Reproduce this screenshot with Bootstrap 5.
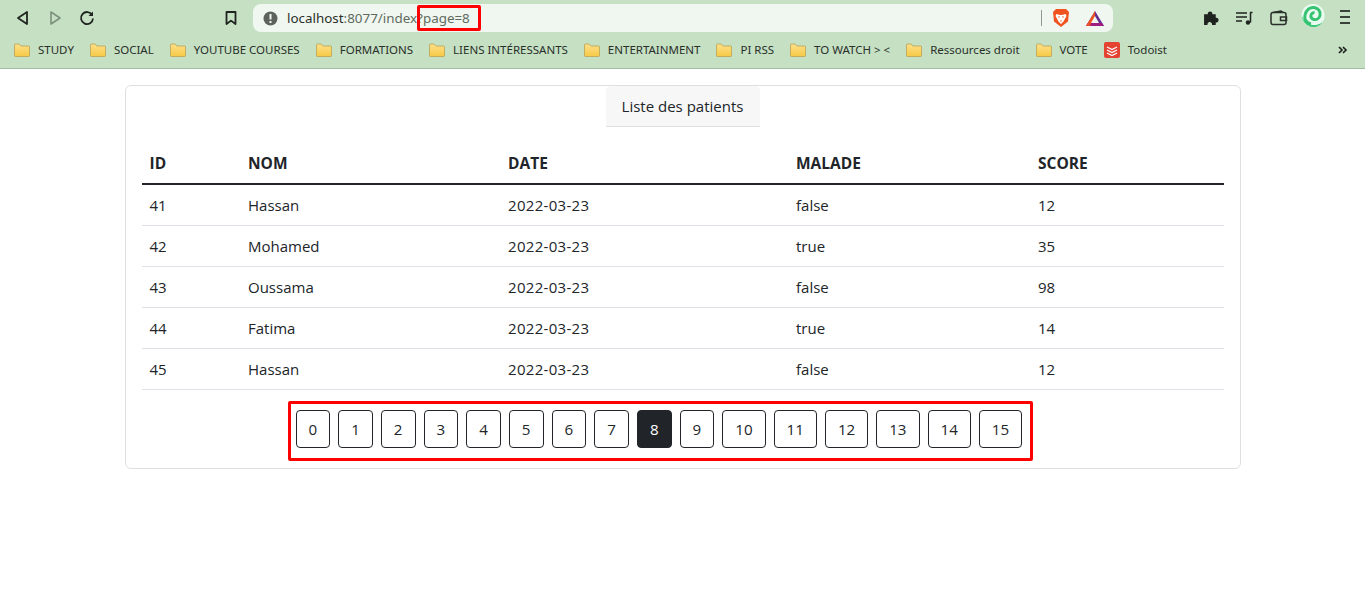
<!DOCTYPE html>
<html lang="fr">
<head>
<meta charset="utf-8">
<title>Liste des patients</title>
<link rel="stylesheet" href="https://cdn.jsdelivr.net/npm/bootstrap@5.3.0/dist/css/bootstrap.min.css">
<style>
body{font-family:"Open Sans","Noto Sans",sans-serif;font-size:15px;line-height:24px;color:#212529;overflow:hidden}
.chrome-top{background:#c5e0c3;height:69px;border-bottom:1px solid #a3bda2;font-family:"Noto Sans",sans-serif}
.tool-row{height:36px;padding-top:4px}
.nav-icons{width:253px;height:28px;flex:none;position:relative}
.nav-icons svg{position:absolute;top:5px}
.url-bar{width:860px;height:28px;background:#f0f7f0;border-radius:8px;flex:none;position:relative;padding-left:10px;gap:9px;font-size:13.4px;color:#5f6b5f}
.url-host{color:#2b2f2b}
.url-mark{position:absolute;left:164px;top:1px;width:64px;height:26px;border:3px solid #f00;border-radius:2px}
.url-sep{position:absolute;left:788px;top:6px;width:1px;height:16px;background:#8d9a8d}
.url-ico{position:absolute;top:5px}
.ext-row{flex:1;position:relative}
.ext-row svg{position:absolute;top:5px}
.mark-row{height:27px;padding-left:14px;gap:16px;font-size:11.5px;color:#2a2f2a;position:relative;white-space:nowrap}
.mark-item{display:flex;align-items:center;gap:8px}
.mark-more{position:absolute;left:1338px;top:9px}
.pat-card{margin-top:16px;border-color:#dfdfdf}
.pat-head{width:154px;height:41px;padding:8px 0;text-align:center;background:#f7f7f7;border-bottom:1px solid #dfdfdf;border-radius:0}
.pat-body{padding-bottom:7px}
.pat-table{table-layout:fixed;width:100%;margin-bottom:11px}
.pat-table th,.pat-table td{padding:8px;line-height:24px}
.pat-table thead th{font-weight:700;font-size:15.5px;border-bottom:2px solid #212529;height:41px}
.pat-table tbody td{height:41px;border-bottom:1px solid #dee2e6}
.pat-table thead{border-bottom:0}
.pat-table .date-cell{letter-spacing:.3px}
.w-id{width:98.5px}.w-nom{width:260px}.w-date{width:288px}.w-mal{width:242px}
.pager{border:3px solid #f00;border-radius:2px;padding:6px 8px 10px 5px;gap:8px;margin:0 0 0 146px;list-style:none;width:745px}
.pager-btn{padding:6px 12px;font-size:15.15px;line-height:24px;border-radius:4px;--bs-btn-border-color:#212529;--bs-btn-color:#212529;height:38px}
.pager-btn.btn-dark{color:#fff}
</style>
</head>
<body>
<svg width="0" height="0" class="d-block position-absolute">
  <defs>
    <linearGradient id="fold" x1="0" y1="0" x2="0" y2="1"><stop offset="0" stop-color="#fde08a"/><stop offset="1" stop-color="#f6c945"/></linearGradient>
    <symbol id="folder" viewBox="0 0 16 14"><path d="M.5 2q0-1 1-1h3.500l2 2h7.500q1 0 1 1v8.500q0 1-1 1h-13q-1 0-1-1z" fill="url(#fold)" stroke="#b59a4a" stroke-width=".7"/></symbol>
  </defs>
</svg>
<header class="chrome-top">
  <div class="tool-row d-flex">
    <div class="nav-icons">
      <svg style="left:14px" width="18" height="18" viewBox="0 0 18 18" fill="none" stroke="#202420" stroke-width="1.8" stroke-linejoin="round"><path d="M13 3 4 9l9 6z"/></svg>
      <svg style="left:46px" width="18" height="18" viewBox="0 0 18 18" fill="none" stroke="#7d917c" stroke-width="1.6" stroke-linejoin="round"><path d="M5 3l9 6-9 6z"/></svg>
      <svg style="left:78px" width="18" height="18" viewBox="0 0 18 18" fill="none" stroke="#202420" stroke-width="1.8"><path d="M14.2 6A6 6 0 1 0 15 9.5"/><path d="M15 2.5V7h-4.500z" fill="#202420" stroke="none"/></svg>
      <svg style="left:222px" width="18" height="18" viewBox="0 0 18 18" fill="none" stroke="#202420" stroke-width="1.8" stroke-linejoin="round"><path d="M4.500 3h9v12L9 11.600 4.500 15z"/></svg>
    </div>
    <div class="url-bar d-flex align-items-center">
      <svg width="15" height="15" viewBox="0 0 15 15"><circle cx="7.500" cy="7.500" r="7" fill="#5d625d"/><rect x="6.500" y="3" width="2" height="5.500" fill="#f0f7f0"/><rect x="6.500" y="10" width="2" height="2" fill="#f0f7f0"/></svg>
      <span><span class="url-host">localhost</span>:8077/index?page=8</span>
      <span class="url-mark"></span>
      <span class="url-sep"></span>
      <svg class="url-ico" style="left:799px;top:4px" width="18" height="20" viewBox="0 0 18 20"><path d="M4 1h10l3 3-1 9.500-7 5.500-7-5.500L1 4z" fill="#f0531f"/><path d="M4.500 6l3.500 1h2l3.500-1 1 2-3 5.500-2.500 2.500-2.500-2.500-3-5.500z" fill="#fff"/><path d="M8 12.500h2l-1 1.500z" fill="#f0531f"/><path d="M6 8.500h2L7 10zM10 8.500h2l-1 1.500z" fill="#f0531f"/></svg>
      <svg class="url-ico" style="left:832px;top:6px" width="20" height="17" viewBox="0 0 20 17"><path d="M10 1 1 16h18z" fill="#662d91"/><path d="M10 1 1 16h5L10 8z" fill="#f0531f"/><path d="M10 6 6 13h8z" fill="#f0f7f0"/><path d="M1 16h18l-2-3H3z" fill="#9e1f7f"/><path d="M1 16l2-3h3l-1 3z" fill="#ef4f26"/></svg>
    </div>
    <div class="ext-row">
      <svg style="left:90px;top:5px" width="17" height="17" viewBox="0 0 16 16" fill="#1f231f"><path d="M1 5h3.500a2.200 2.200 0 1 1 4.300 0H12v3.300a2.200 2.200 0 1 1 0 4.300V15H8.500a2.200 2.200 0 1 0-4.300 0H1z"/></svg>
      <svg style="left:122px;top:6px" width="18" height="16" viewBox="0 0 18 16" fill="none" stroke="#1f231f" stroke-width="1.500"><path d="M1 3h11M1 7h11M1 11h6"/><path d="M15.500 2.500v10M15 2.500h2.500"/><circle cx="13" cy="12.500" r="2.200" fill="#1f231f" stroke="none"/></svg>
      <svg style="left:157px;top:6px" width="18" height="16" viewBox="0 0 18 16" fill="none" stroke="#2a2e2a" stroke-width="1.500"><rect x="1" y="2.500" width="15" height="12" rx="2"/><path d="M3 2.500l8-1.500 2 1.500M10.500 7h6v3.500h-6z"/></svg>
      <svg style="left:188px;top:-1px" width="24" height="25" viewBox="0 0 24 25"><circle cx="12" cy="12.500" r="11.500" fill="#e9fbf0"/><path d="M.8 12.500a11.500 11.500 0 0 0 21 6.500A13 13 0 0 1 .8 12.500z" fill="#3ec878"/><path d="M10 21c-5-1-7-5-6-9 1-5 5-8 9-7.500 4 .5 7 4 6 8-.7 3-3.500 4.500-6 4-2.300-.5-3.500-2.500-3-4.500.4-1.500 2-2.500 3.500-2" fill="none" stroke="#35c271" stroke-width="3"/></svg>
      <svg style="left:224px;top:4px" width="16" height="16" viewBox="0 0 16 16" stroke="#3a403a" stroke-width="2"><path d="M3 3h10M3 9h10M3 15h10"/></svg>
    </div>
  </div>
  <nav class="mark-row d-flex align-items-center">
    <span class="mark-item"><svg width="16" height="14"><use href="#folder"/></svg>STUDY</span>
    <span class="mark-item"><svg width="16" height="14"><use href="#folder"/></svg>SOCIAL</span>
    <span class="mark-item"><svg width="16" height="14"><use href="#folder"/></svg>YOUTUBE COURSES</span>
    <span class="mark-item"><svg width="16" height="14"><use href="#folder"/></svg>FORMATIONS</span>
    <span class="mark-item"><svg width="16" height="14"><use href="#folder"/></svg>LIENS INTÉRESSANTS</span>
    <span class="mark-item"><svg width="16" height="14"><use href="#folder"/></svg>ENTERTAINMENT</span>
    <span class="mark-item"><svg width="16" height="14"><use href="#folder"/></svg>PI RSS</span>
    <span class="mark-item"><svg width="16" height="14"><use href="#folder"/></svg>TO WATCH &gt; &lt;</span>
    <span class="mark-item"><svg width="16" height="14"><use href="#folder"/></svg>Ressources droit</span>
    <span class="mark-item"><svg width="16" height="14"><use href="#folder"/></svg>VOTE</span>
    <span class="mark-item"><svg width="16" height="16" viewBox="0 0 16 16"><rect width="16" height="16" rx="2" fill="#e44332"/><path d="M3 5l5 2.500L13 5M3 8l5 2.500L13 8M3 11l5 2.500L13 11" fill="none" stroke="#fff" stroke-width="1.200"/></svg>Todoist</span>
    <svg class="mark-more" width="10" height="10" viewBox="0 0 10 10" fill="none" stroke="#202420" stroke-width="1.700"><path d="M1 2l3 3-3 3M5 2l3 3-3 3"/></svg>
  </nav>
</header>
<main class="container">
  <div class="card pat-card">
    <div class="card-header pat-head mx-auto">Liste des patients</div>
    <div class="card-body pat-body">
      <table class="table pat-table">
        <colgroup><col class="w-id"><col class="w-nom"><col class="w-date"><col class="w-mal"><col></colgroup>
        <thead><tr><th>ID</th><th>NOM</th><th>DATE</th><th>MALADE</th><th>SCORE</th></tr></thead>
        <tbody>
          <tr><td>41</td><td>Hassan</td><td class="date-cell">2022-03-23</td><td>false</td><td>12</td></tr>
          <tr><td>42</td><td>Mohamed</td><td class="date-cell">2022-03-23</td><td>true</td><td>35</td></tr>
          <tr><td>43</td><td>Oussama</td><td class="date-cell">2022-03-23</td><td>false</td><td>98</td></tr>
          <tr><td>44</td><td>Fatima</td><td class="date-cell">2022-03-23</td><td>true</td><td>14</td></tr>
          <tr><td>45</td><td>Hassan</td><td class="date-cell">2022-03-23</td><td>false</td><td>12</td></tr>
        </tbody>
      </table>
      <ul class="pager d-flex">
        <li><a class="btn btn-outline-dark pager-btn" href="#">0</a></li>
        <li><a class="btn btn-outline-dark pager-btn" href="#">1</a></li>
        <li><a class="btn btn-outline-dark pager-btn" href="#">2</a></li>
        <li><a class="btn btn-outline-dark pager-btn" href="#">3</a></li>
        <li><a class="btn btn-outline-dark pager-btn" href="#">4</a></li>
        <li><a class="btn btn-outline-dark pager-btn" href="#">5</a></li>
        <li><a class="btn btn-outline-dark pager-btn" href="#">6</a></li>
        <li><a class="btn btn-outline-dark pager-btn" href="#">7</a></li>
        <li><a class="btn btn-dark pager-btn" href="#">8</a></li>
        <li><a class="btn btn-outline-dark pager-btn" href="#">9</a></li>
        <li><a class="btn btn-outline-dark pager-btn" href="#">10</a></li>
        <li><a class="btn btn-outline-dark pager-btn" href="#">11</a></li>
        <li><a class="btn btn-outline-dark pager-btn" href="#">12</a></li>
        <li><a class="btn btn-outline-dark pager-btn" href="#">13</a></li>
        <li><a class="btn btn-outline-dark pager-btn" href="#">14</a></li>
        <li><a class="btn btn-outline-dark pager-btn" href="#">15</a></li>
      </ul>
    </div>
  </div>
</main>
<script src="https://cdn.jsdelivr.net/npm/bootstrap@5.3.0/dist/js/bootstrap.bundle.min.js"></script>
</body>
</html>
